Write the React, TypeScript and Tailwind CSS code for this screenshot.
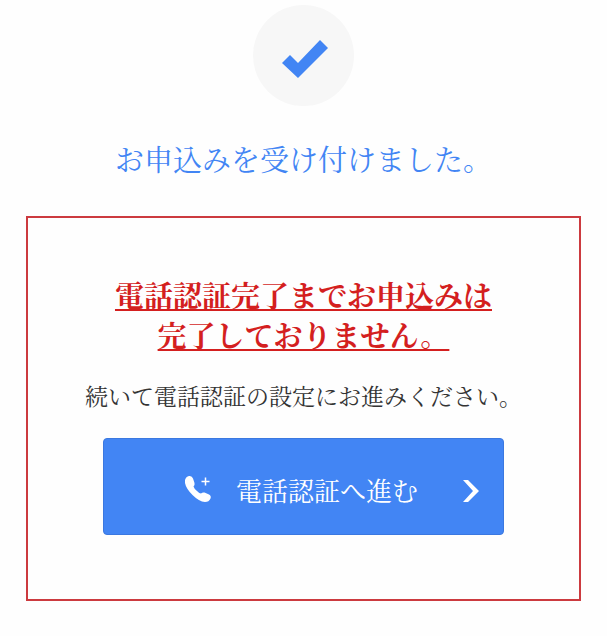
import React from "react";

const serif = "font-['Liberation_Serif','Noto_Serif_CJK_JP','Noto_Sans_CJK_JP',serif]";

function CheckBadge() {
  return (
    <div className="flex size-[101px] items-center justify-center rounded-full bg-[#f7f7f7] pt-1.5 pl-0.5">
      <svg viewBox="0 0 46 38" className="h-[38px] w-[46px] fill-[#4285f4]" aria-hidden="true">
        <path d="M0 23 L8 15 L16 23 L38 0 L46 8 L16 38 Z" />
      </svg>
    </div>
  );
}

function PhonePlusIcon() {
  return (
    <svg viewBox="0 0 28 28" className="-mt-2 size-7 shrink-0" aria-hidden="true">
      <path
        fill="#fff"
        d="M1 5 Q2 1.500 5 1 Q8 .5 9 3.500 L10.500 8 Q11 10 9.500 11.500 Q10 13.500 13 16 Q15.500 18.500 17 18.500 Q18.500 17 20.500 17.500 L25 19.500 Q27.500 21 26.500 23.500 Q25 27 21 27 Q15 26.500 8.500 20 Q2 13.500 1 8 Z"
      />
      <path d="M21.500 2.500v8M17.500 6.500h8" stroke="#fff" strokeWidth="1.500" />
    </svg>
  );
}

function ChevronIcon() {
  return (
    <svg viewBox="0 0 16 22" className="-mt-1 h-[22px] w-4 shrink-0" aria-hidden="true">
      <path d="M0 0 H5 L16 11 L5 22 H0 L10 11 Z" fill="#fff" />
    </svg>
  );
}

export default function App() {
  return (
    <main className={`min-h-screen bg-[#fefefe] px-[26px] pt-[5px] pb-[34px] ${serif}`}>
      <header className="flex flex-col items-center">
        <CheckBadge />
        <h1 className="mt-8 text-[29px] leading-[46px] text-[#4285f4]">お申込みを受け付けました。</h1>
      </header>

      <section className="mt-8 flex flex-col items-center border-2 border-[#cc3a3f] pt-[59px] pb-16 text-center">
        <h2 className="text-[29px] leading-10 font-bold text-[#d41f1f] underline">
          電話認証完了までお申込みは
          <br />
          完了しておりません。
        </h2>
        <p className="mt-[21px] text-[23px] leading-10 text-[#333]">続いて電話認証の設定にお進みください。</p>
        <button
          type="button"
          className="mt-5 flex h-[97px] w-[401px] max-w-full items-center rounded-[4px] border border-[#3b78e0] bg-[#4285f4] pt-3 pr-6 pl-20 text-[26px] text-white"
        >
          <PhonePlusIcon />
          <span className="ml-6 flex-1 text-left">電話認証へ進む</span>
          <ChevronIcon />
        </button>
      </section>
    </main>
  );
}
